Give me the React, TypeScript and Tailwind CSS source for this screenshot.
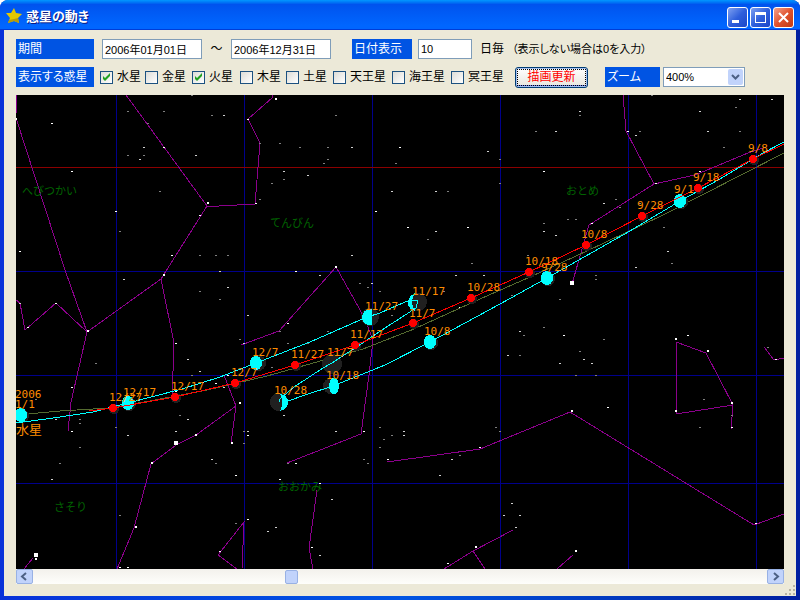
import React from "react";

type Pt = [number, number];

const CONSTELLATION_LINES: string[] = [
  "17,95 16,113",
  "16,118 65,270 87,332",
  "126,95 207,206 219,206 255,204 260,143 248,119 272,98 273,95",
  "207,206 161,279 87,332 71,402 68,431",
  "161,279 174,343 172,400",
  "16,300 20,303 25,330 56,303 87,332",
  "241,345 279,331 336,267 364,317 373,340 369,375 361,434 287,463",
  "224,375 236,406 231,443",
  "236,406 196,435 176,445 151,464 134,528 117,569",
  "24,569 33,558",
  "237,569 218,555 244,522 242,569",
  "317,490 309,548 313,569",
  "387,462 480,449 570,412 754,525 784,514",
  "444,569 473,551 513,530",
  "473,551 485,569",
  "557,569 573,555",
  "676,342 706,353 733,405 676,414 676,342",
  "733,405 731,429",
  "764,347 774,360 784,358",
  "623,95 626,131 654,184 589,225 572,284",
  "654,184 695,175 748,153 766,147",
];

const BRIGHT: Pt[] = [
  [51, 123], [247, 119], [163, 147], [71, 171], [115, 211], [19, 251], [199, 215], [171, 255], [255, 203],
  [399, 147], [375, 211], [407, 227], [467, 227], [627, 131], [543, 171], [699, 171], [655, 183], [591, 223],
  [55, 303], [27, 327], [175, 343], [227, 375], [215, 383], [71, 387], [71, 431], [295, 271], [287, 323],
  [459, 307], [363, 431], [479, 447], [563, 335], [607, 407], [687, 335], [731, 427], [775, 359], [235, 475],
  [247, 519], [219, 551], [295, 463], [279, 479], [319, 483], [387, 459], [447, 563], [755, 523], [311, 547],
  [119, 567], [127, 567], [247, 435], [175, 391],
];

const MEDIUM: Pt[] = [
  [223, 115], [143, 147], [139, 159], [195, 155], [351, 147], [283, 171], [307, 175], [487, 151], [391, 191],
  [435, 191], [435, 231], [351, 255], [739, 99], [771, 99], [579, 111], [699, 111], [555, 131], [635, 135],
  [707, 131], [603, 203], [543, 231], [555, 235], [667, 251], [635, 267], [19, 303], [123, 279], [227, 287],
  [219, 271], [247, 315], [243, 343], [187, 359], [199, 371], [187, 419], [55, 419], [127, 435], [247, 431],
  [319, 275], [455, 275], [483, 275], [371, 283], [283, 415], [335, 431], [403, 431], [403, 435], [519, 331],
  [507, 355], [583, 359], [591, 363], [559, 363], [51, 479], [211, 459], [267, 531], [331, 499], [275, 527],
  [319, 555], [451, 459], [439, 475], [511, 503], [503, 515], [519, 515], [515, 527], [223, 387], [267, 375],
  [175, 431],
];

const FAINT: Pt[] = [
  [191, 95], [127, 111], [163, 111], [147, 123], [211, 115], [259, 143], [127, 155], [143, 155], [159, 191],
  [119, 231], [199, 255], [215, 255], [227, 255], [259, 199], [335, 115], [279, 143], [299, 147], [327, 147],
  [327, 159], [323, 163], [283, 179], [271, 183], [395, 163], [499, 159], [499, 183], [447, 191], [427, 239],
  [471, 263], [527, 255], [651, 95], [735, 107], [579, 115], [535, 131], [639, 131], [739, 131], [723, 147],
  [615, 199], [619, 207], [567, 219], [575, 219], [543, 223], [663, 227], [671, 263], [595, 275], [595, 279],
  [639, 203], [199, 291], [219, 299], [239, 339], [95, 363], [191, 375], [179, 415], [79, 419], [79, 423],
  [115, 427], [243, 431], [243, 443], [79, 447], [359, 283], [367, 287], [379, 291], [279, 331], [327, 331],
  [287, 343], [307, 343], [391, 315], [271, 367], [379, 427], [391, 435], [383, 439], [379, 447], [559, 299],
  [511, 295], [543, 327], [523, 335], [603, 339], [579, 351], [519, 355], [575, 375], [595, 375], [495, 427],
  [499, 431], [703, 399], [699, 427], [731, 415], [767, 347], [59, 463], [215, 463], [119, 515], [235, 523],
  [363, 459], [367, 463], [287, 463], [459, 455], [35, 399], [443, 291],
];

const LARGE: Pt[] = [
  [207, 202], [15, 118], [275, 98], [335, 266], [163, 274], [87, 330], [239, 402], [195, 434], [231, 442],
  [571, 410], [675, 338], [707, 350], [731, 402], [675, 410], [151, 462], [135, 526], [35, 558], [475, 546],
  [575, 550],
];

const GIANT: Pt[] = [[570, 281], [174, 441], [34, 553]];

const MARS: Pt[] = [
  [113, 408], [175, 397], [235, 383], [295, 365], [355, 345], [413, 323], [471, 298], [529, 272], [586, 245],
  [642, 216], [698, 188], [753, 159],
];

const DATES: [number, number, string][] = [
  [674, 193, "9/1"], [541, 271, "9/28"], [424, 335, "10/8"], [326, 379, "10/18"], [274, 394, "10/28"],
  [327, 356, "11/7"], [412, 295, "11/17"], [365, 310, "11/27"], [252, 356, "12/7"], [123, 396, "12/17"],
  [109, 401, "12/27"], [15, 398, "2006"], [15, 408, "1/1"], [748, 152, "9/8"], [693, 181, "9/18"],
  [637, 209, "9/28"], [581, 238, "10/8"], [525, 265, "10/18"], [467, 291, "10/28"], [409, 317, "11/7"],
  [350, 338, "11/17"], [291, 358, "11/27"], [231, 376, "12/7"], [171, 390, "12/17"],
];

const NAMES: [number, number, string][] = [
  [22, 195, "へびつかい"], [270, 227, "てんびん"], [566, 195, "おとめ"], [278, 491, "おおかみ"], [54, 511, "さそり"],
];

const FULL_MERCURY: [number, number, number][] = [
  [680, 201, 6], [547, 278, 6], [430, 342, 6], [128, 403, 6], [21, 415, 6],
];

function Stars({ points, size, height, color }: { points: Pt[]; size: number; height: number; color: string }) {
  return (
    <g fill={color}>
      {points.map(([x, y], i) => (
        <rect key={i} x={x} y={y} width={size} height={height} />
      ))}
    </g>
  );
}

function StarMap() {
  return (
    <svg
      viewBox="16 95 768 474"
      preserveAspectRatio="xMinYMin slice"
      className="block h-full w-full bg-black [font-feature-settings:normal]"
      shapeRendering="crispEdges"
      role="img"
      aria-label="惑星の動き"
    >
      <g fill="#00008b">
        {[116, 244, 372, 500, 628, 756].map((x) => (
          <rect key={x} x={x} y="95" width="1" height="474" />
        ))}
        {[271, 375, 483].map((y) => (
          <rect key={y} x="16" y={y} width="768" height="1" />
        ))}
      </g>
      <rect x="16" y="167" width="768" height="1" fill="#8b0000" />
      <g fill="none" stroke="#8b008b">
        {CONSTELLATION_LINES.map((p) => (
          <polyline key={p} points={p} />
        ))}
      </g>
      <Stars points={FAINT} size={2} height={1} color="#808080" />
      <Stars points={MEDIUM} size={2} height={1} color="#d0d0d0" />
      <Stars points={BRIGHT} size={2} height={1} color="#ffffff" />
      <Stars points={LARGE} size={2} height={2} color="#ffffff" />
      <Stars points={GIANT} size={4} height={4} color="#ffffff" />
      <g fill="#006400" className="font-['Noto_Sans_CJK_JP',sans-serif] text-[11px]">
        {NAMES.map(([x, y, t]) => (
          <text key={t} x={x} y={y}>{t}</text>
        ))}
      </g>

      <polyline
        fill="none"
        stroke="#556b2f"
        points="16,415 60,411 110,408 150,401 207,390 267,376 363,349 414,329 480,299 530,277 587,251 663,215 784,153"
      />

      <g fill="#202020">
        {FULL_MERCURY.map(([x, y, r]) => (
          <circle key={x} cx={x + 1} cy={y + 1} r={r + 1} />
        ))}
        <circle cx="331" cy="386" r="8" />
        <circle cx="279" cy="402" r="9" />
        <circle cx="332" cy="364" r="10" />
        <circle cx="418" cy="302" r="9" />
        <circle cx="370" cy="317" r="9" />
        <circle cx="258" cy="363" r="8" />
        {MARS.map(([x, y]) => (
          <circle key={x} cx={x + 1} cy={y + 1} r="5" />
        ))}
      </g>
      <g fill="#00ffff">
        {FULL_MERCURY.map(([x, y, r]) => (
          <ellipse key={x} cx={x} cy={y} rx={r} ry={r + 1} />
        ))}
        <ellipse cx="334" cy="386" rx="5" ry="8" />
        <ellipse cx="256" cy="363" rx="6" ry="7" />
        <path d="M280 394 C285 394 288 398 288 402 C288 406 285 410 280 411 C283 406 283 398 280 394Z" />
        <path d="M372 309 V325 C366 326 362 322 362 317 C362 312 366 309 372 309Z" />
        <path d="M415 293 C411 295 408 298 408 303 C408 307 411 310 415 311 C411 305 411 299 415 293Z" />
      </g>
      <polyline
        fill="none"
        stroke="#00ffff"
        points="784,142 763,153 720,179 680,201 630,231 547,278 500,304 430,342 385,365 333,386 305,395 288,401"
      />
      <polyline
        fill="none"
        stroke="#00ffff"
        points="279,402 280,399 294,387 323,368 332,363 355,348 385,328 416,308 418,300 413,300 405,302 380,313 367,317 310,342 256,363 220,377 182,389 128,403 93,412 53,418 16,423"
      />
      <polyline
        fill="none"
        stroke="#ff0000"
        points="89,411 113,408 175,397 235,383 295,365 355,345 413,323 471,298 529,272 586,245 642,216 698,188 753,159 784,144"
      />
      <g fill="#ff0000">
        {MARS.map(([x, y]) => (
          <circle key={x} cx={x} cy={y} r="4" />
        ))}
      </g>
      <g fill="#ff8c00" className="font-['DejaVu_Sans_Mono','Noto_Sans_CJK_JP',monospace] text-[11px]">
        {DATES.map(([x, y, t]) => (
          <text key={`${x}-${y}`} x={x} y={y}>{t}</text>
        ))}
        <text x="16" y="434" className="font-['Noto_Sans_CJK_JP',sans-serif] text-[13px]">水星</text>
      </g>
    </svg>
  );
}

const labelClass = "flex h-5 items-center bg-[#0054e3] px-0.5 text-white";
const fieldClass = "h-5 border border-[#7f9db9] bg-white px-0.5 text-[11px] text-black outline-none";

function PlanetCheck({ name, checked, width }: { name: string; checked?: boolean; width: string }) {
  return (
    <label className={`flex items-center gap-1 ${width}`}>
      <span className="grid">
        <input
          type="checkbox"
          defaultChecked={checked}
          className="peer col-start-1 row-start-1 size-[13px] appearance-none border border-[#1c5180] bg-linear-to-br from-[#dcdcd7] to-white"
        />
        <svg viewBox="0 0 13 13" className="pointer-events-none invisible col-start-1 row-start-1 size-[13px] peer-checked:visible">
          <path d="M3 5v3l2 2 5-5V2L5 7z" fill="#21a121" />
        </svg>
      </span>
      <span>{name}</span>
    </label>
  );
}

function CaptionButton({ label, close, children }: { label: string; close?: boolean; children: React.ReactNode }) {
  return (
    <button
      type="button"
      aria-label={label}
      className={`size-[21px] rounded-[3px] border border-white ${
        close
          ? "bg-linear-to-br from-[#f0a08a] via-[#e0522d] to-[#c03a12]"
          : "bg-linear-to-br from-[#7f9ff0] via-[#2f5fdc] to-[#1c46c8]"
      }`}
    >
      <svg viewBox="0 0 19 19" className="block size-full">{children}</svg>
    </button>
  );
}

export default function App() {
  return (
    <div className="h-screen bg-white font-['Liberation_Sans','Noto_Sans_CJK_JP',sans-serif] text-[12px] leading-4 text-black [font-feature-settings:'palt']">
      <div className="flex h-full flex-col rounded-t-lg bg-linear-to-r from-[#0831d9] via-[#0054e3] to-[#001ea0] px-1 pb-1">
        <header className="-mx-1 flex h-[30px] shrink-0 items-center rounded-t-lg bg-linear-to-b from-[#0997ff] from-0% via-[#0053ee] via-15% to-[#0066ff] to-85% pr-1.5 pl-1.5 shadow-[inset_0_-1px_0_#003dd7]">
          <svg viewBox="0 0 16 16" className="mt-0.5 size-4">
            <path d="M8 0 L10 5 L16 6 L12 10 L13 15 L8 13 L2 15 L4 10 L0 5 L5 5Z" fill="#e3c800" />
            <path d="M12 10 L13 15 L8 13 L2 15 L3 12 L8 11Z" fill="#b89c08" />
          </svg>
          <h1 className="mt-1 ml-1 flex-1 text-[13px] font-bold text-white [text-shadow:1px_1px_#0a1883]">惑星の動き</h1>
          <div className="mt-1 flex gap-0.5">
            <CaptionButton label="最小化">
              <rect x="4" y="12" width="7" height="3" fill="#fff" />
            </CaptionButton>
            <CaptionButton label="最大化">
              <path d="M4 4h11v11H4z M5 7v7h9V7z" fill="#fff" fillRule="evenodd" />
            </CaptionButton>
            <CaptionButton label="閉じる" close>
              <path d="M5 5l9 9M14 5l-9 9" stroke="#fff" strokeWidth="2" fill="none" />
            </CaptionButton>
          </div>
        </header>

        <main className="flex min-h-0 flex-1 flex-col bg-[#ece9d8]">
          <form className="flex flex-col gap-2 px-3 pt-[9px] pb-2 whitespace-nowrap" onSubmit={(e) => e.preventDefault()}>
            <div className="flex h-5 items-center">
              <label htmlFor="from" className={`${labelClass} w-[78px]`}>期間</label>
              <input id="from" defaultValue="2006年01月01日" className={`${fieldClass} ml-2 w-[100px]`} />
              <span className="w-[29px] text-center">～</span>
              <input aria-label="終了日" defaultValue="2006年12月31日" className={`${fieldClass} w-[100px]`} />
              <label htmlFor="step" className={`${labelClass} ml-[21px] w-[60px]`}>日付表示</label>
              <input id="step" defaultValue="10" className={`${fieldClass} ml-1.5 w-[54px]`} />
              <span className="ml-2 w-8">日毎</span>
              <span className="text-[11px]">（表示しない場合は0を入力）</span>
            </div>
            <div className="flex h-5 items-center">
              <span className={`${labelClass} w-[78px]`}>表示する惑星</span>
              <div className="ml-1.5 flex">
                <PlanetCheck name="水星" checked width="w-[45px]" />
                <PlanetCheck name="金星" width="w-[47px]" />
                <PlanetCheck name="火星" checked width="w-12" />
                <PlanetCheck name="木星" width="w-[46px]" />
                <PlanetCheck name="土星" width="w-[47px]" />
                <PlanetCheck name="天王星" width="w-[59px]" />
                <PlanetCheck name="海王星" width="w-[59px]" />
                <PlanetCheck name="冥王星" width="w-16" />
              </div>
              <button type="submit" className="h-[21px] w-[73px] rounded-[3px] border border-[#003c74] bg-linear-to-b from-white to-[#e8e6dd] p-px text-[#ff0000] shadow-[inset_0_0_0_1px_#a5c0f0,inset_0_-2px_0_#6982ee]">
                <span className="flex h-full items-center justify-center border border-dotted border-black">描画更新</span>
              </button>
              <label htmlFor="zoom" className={`${labelClass} ml-[17px] w-[55px]`}>ズーム</label>
              <div className="ml-[3px] grid w-[82px] items-center">
                <select id="zoom" defaultValue="400%" className={`${fieldClass} col-start-1 row-start-1 w-full appearance-none`}>
                  <option>100%</option>
                  <option>200%</option>
                  <option>400%</option>
                </select>
                <svg viewBox="0 0 15 16" className="pointer-events-none col-start-1 row-start-1 mr-0.5 h-4 w-[15px] justify-self-end rounded-[2px] bg-[#c1d3fb]">
                  <path d="M4 6l3.500 3.500L11 6" fill="none" stroke="#4d6185" strokeWidth="2" />
                </svg>
              </div>
            </div>
          </form>

          <div className="min-h-0 flex-1 px-3">
            <StarMap />
          </div>

          <div className="mx-3 flex h-[15px] shrink-0 bg-linear-to-b from-[#f3f1ec] to-[#fefefb]">
            <button type="button" aria-label="左へ" className="w-[17px] rounded-[2px] border border-[#98b1e4] bg-[#c1d3fb]">
              <svg viewBox="0 0 15 13" className="block size-full">
                <path d="M9 3L5 6.500L9 10" fill="none" stroke="#4d6185" strokeWidth="2" />
              </svg>
            </button>
            <input
              type="range"
              aria-label="横スクロール"
              defaultValue={35}
              className="min-w-0 flex-1 appearance-none bg-transparent [&::-webkit-slider-thumb]:h-[14px] [&::-webkit-slider-thumb]:w-[13px] [&::-webkit-slider-thumb]:appearance-none [&::-webkit-slider-thumb]:rounded-[2px] [&::-webkit-slider-thumb]:border [&::-webkit-slider-thumb]:border-[#98b1e4] [&::-webkit-slider-thumb]:bg-[#c1d3fb]"
            />
            <button type="button" aria-label="右へ" className="w-[17px] rounded-[2px] border border-[#98b1e4] bg-[#c1d3fb]">
              <svg viewBox="0 0 15 13" className="block size-full">
                <path d="M6 3L10 6.500L6 10" fill="none" stroke="#4d6185" strokeWidth="2" />
              </svg>
            </button>
          </div>
          <footer className="flex h-3 shrink-0 justify-end">
            <svg viewBox="0 0 12 12" className="size-3" fill="#b8b4a3">
              <rect x="9" y="1" width="2" height="2" />
              <rect x="5" y="5" width="2" height="2" />
              <rect x="9" y="5" width="2" height="2" />
              <rect x="1" y="9" width="2" height="2" />
              <rect x="5" y="9" width="2" height="2" />
              <rect x="9" y="9" width="2" height="2" />
            </svg>
          </footer>
        </main>
      </div>
    </div>
  );
}
